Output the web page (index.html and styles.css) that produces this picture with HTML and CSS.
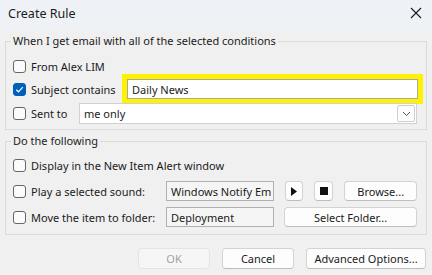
FILE: index.html
```html
<!DOCTYPE html>
<html lang="en">
<head>
    <meta charset="UTF-8">
    <title>Create Rule</title>
    <link rel="stylesheet" href="styles.css">
</head>
<body>
    <div class="titlebar">
        <span class="title">Create Rule</span>
        <svg class="close" width="12" height="12" viewBox="0 0 12 12">
            <path d="M1 1 L11 11 M11 1 L1 11" stroke="#1a1a1a" stroke-width="1.1" fill="none"/>
        </svg>
    </div>

    <div class="dialog">
        <fieldset class="group group-when">
            <legend>When I get email with all of the selected conditions</legend>
            <div class="row row-from">
                <label class="check"><span class="box"></span>From Alex LIM</label>
            </div>
            <div class="row row-subject">
                <label class="check"><span class="box checked">
                    <svg width="9" height="9" viewBox="0 0 9 9"><path d="M1.3 4.7 L3.5 6.8 L7.8 2.2" stroke="#fff" stroke-width="1.2" fill="none"/></svg>
                </span>Subject contains</label>
                <div class="field highlight">Daily News</div>
            </div>
            <div class="row row-sent">
                <label class="check"><span class="box"></span>Sent to</label>
                <div class="combo">
                    <span>me only</span>
                    <span class="drop">
                        <svg width="9" height="6" viewBox="0 0 9 6"><path d="M1 1 L4.5 4.5 L8 1" stroke="#555" stroke-width="1" fill="none"/></svg>
                    </span>
                </div>
            </div>
        </fieldset>

        <fieldset class="group group-do">
            <legend>Do the following</legend>
            <div class="row row-alert">
                <label class="check"><span class="box"></span>Display in the New Item Alert window</label>
            </div>
            <div class="row row-sound">
                <label class="check wide"><span class="box"></span>Play a selected sound:</label>
                <div class="field readonly">Windows Notify Em</div>
                <button class="btn icon-btn">
                    <svg width="6" height="9" viewBox="0 0 6 9"><path d="M0 0 L6 4.5 L0 9 Z" fill="#111"/></svg>
                </button>
                <button class="btn icon-btn">
                    <svg width="8" height="8" viewBox="0 0 8 8"><rect width="8" height="8" fill="#111"/></svg>
                </button>
                <button class="btn browse">Browse...</button>
            </div>
            <div class="row row-move">
                <label class="check wide"><span class="box"></span>Move the item to folder:</label>
                <div class="field readonly">Deployment</div>
                <button class="btn folder">Select Folder...</button>
            </div>
        </fieldset>

        <div class="footer">
            <button class="btn action" disabled>OK</button>
            <button class="btn action">Cancel</button>
            <button class="btn advanced">Advanced Options...</button>
        </div>
    </div>
</body>
</html>
```

FILE: styles.css
```css
* {
    margin: 0;
    padding: 0;
    box-sizing: border-box;
}

body {
    font-family: 'Noto Sans', sans-serif;
    font-size: 11px;
    color: #1b1b1b;
    background: #f0f0f0;
    width: 432px;
    height: 275px;
    overflow: hidden;
}

.titlebar {
    height: 30px;
    background: #eef2f7;
    display: flex;
    align-items: center;
    justify-content: space-between;
    padding: 0 10px 4px 8px;
}

.title {
    font-size: 12.5px;
}

.dialog {
    padding: 3px 5px 0 5px;
}

.group {
    border: 1px solid #dadada;
    padding: 8px 9px 5px 7px;
    min-width: 0;
}

.group legend {
    line-height: 16px;
    padding: 0 2px;
    margin-left: -2px;
}

.group-do {
    margin-top: 3px;
    padding-top: 7px;
    padding-bottom: 7px;
}

.row {
    display: flex;
    align-items: center;
}

.row-from { height: 18px; }
.row-subject { height: 28px; }
.row-sent { height: 21px; }
.row-alert { height: 19px; }
.row-sound, .row-move { height: 20px; margin-top: 6px; }

.check {
    display: flex;
    align-items: center;
    gap: 5px;
    flex-shrink: 0;
}

.box {
    width: 13px;
    height: 13px;
    border: 1px solid #666;
    border-radius: 3px;
    background: #fbfbfb;
    display: flex;
    align-items: center;
    justify-content: center;
}

.box.checked {
    background: #005fb8;
    border-color: #005fb8;
}

.row-subject .check { width: 114px; }
.row-sent .check { width: 66px; }
.check.wide { width: 153px; }

.field {
    height: 20px;
    border: 1px solid #a8a8a8;
    background: #fff;
    display: flex;
    align-items: center;
    padding-left: 4px;
    white-space: nowrap;
    overflow: hidden;
}

.highlight {
    flex: 1;
    margin-right: -1px;
    outline: 5px solid #fff200;
}

.combo {
    flex: 1;
    height: 21px;
    border: 1px solid #d0d0d0;
    background: #fff;
    display: flex;
    align-items: center;
    justify-content: space-between;
    padding: 0 0 0 4px;
}

.drop {
    width: 18px;
    height: 17px;
    margin-right: 1px;
    border: 1px solid #cfcfcf;
    border-radius: 2px;
    background: #fdfdfd;
    display: flex;
    align-items: center;
    justify-content: center;
}

.readonly {
    width: 108px;
    background: #f5f5f5;
    border-color: #b0b0b0;
}

.btn {
    font-family: inherit;
    font-size: 11px;
    color: #1b1b1b;
    height: 20px;
    background: #fdfdfd;
    border: 1px solid #d3d3d3;
    border-bottom-color: #bdbdbd;
    border-radius: 4px;
    display: flex;
    align-items: center;
    justify-content: center;
}

.icon-btn {
    width: 19px;
    margin-left: 11px;
}

.icon-btn + .icon-btn {
    margin-left: 11px;
}

.browse {
    width: 73px;
    margin-left: 11px;
}

.folder {
    width: 133px;
    margin-left: 10px;
}

.footer {
    display: flex;
    justify-content: flex-end;
    gap: 12px;
    margin-top: 13px;
    padding-right: 1px;
}

.footer .btn {
    height: 21px;
}

.action {
    width: 72px;
}

.advanced {
    width: 120px;
}

.btn:disabled {
    color: #a2a2a2;
    background: #f6f6f6;
    border-color: #e3e3e3;
}
```
